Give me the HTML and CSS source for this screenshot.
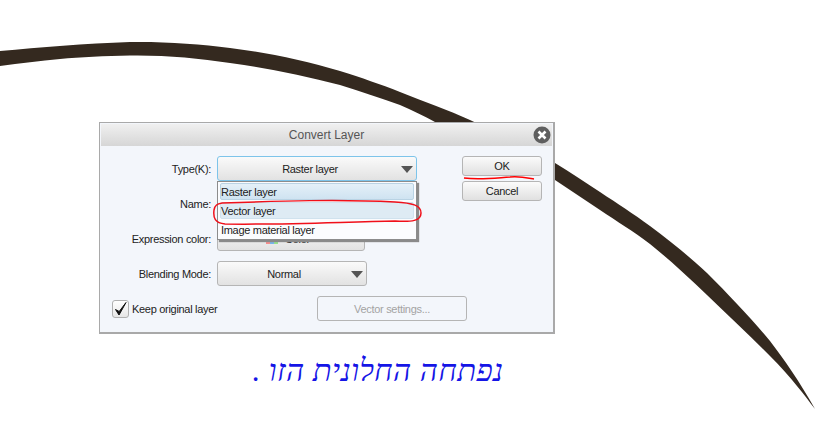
FILE: index.html
```html
<!DOCTYPE html>
<html lang="en">
<head>
    <meta charset="UTF-8">
    <title>Convert Layer</title>
    <link rel="stylesheet" href="styles.css">
</head>
<body>
    <div class="stage">
        <svg class="stroke" width="829" height="437" viewBox="0 0 829 437">
            <path fill="#34291f" d="M0 51 C40 47.5 85 43.5 130 42 C165 41.5 200 44 230 48 C270 53 305 61 340 71 C362 78 380 84 400 92 C425 102 448 110 470 120 C500 134 530 148 555 163 C571 173 585 182 600 192 C618 204 633 213.5 650 226 C670 241 690 257 707 273 C730 296 750 317 770 341 C783 358 800 382 815 409 C805 396 792 378 770 356 C750 336 728 315 707 295 C688 277 670 260 650 244 C633 231 617 221.5 600 210 C585 200 570 190 555 180 C520 157 478 140 435 122 C424 116 412 110 400 105 C380 98 360 91 340 85 C305 76 268 68 230 63 C198 58 165 55 130 55.5 C105 56 80 57 60 59 C40 61 20 63 0 66 Z"/>
        </svg>

        <div class="dialog">
            <div class="title-bar">
                <span>Convert Layer</span>
                <svg class="close" width="18" height="18" viewBox="0 0 18 18">
                    <circle cx="9" cy="9" r="8.5" fill="#5f5f5f"/>
                    <path d="M5.5 5.5 L12.5 12.5 M12.5 5.5 L5.5 12.5" stroke="#fff" stroke-width="2.6"/>
                </svg>
            </div>
            <div class="dialog-body">
                <div class="form">
                    <div class="row">
                        <label>Type(K):</label>
                        <div class="select select-wide select-focus">Raster layer<i class="arrow"></i></div>
                    </div>
                    <div class="row">
                        <label>Name:</label>
                    </div>
                    <div class="row">
                        <label>Expression color:</label>
                        <div class="select select-short">
                            <span class="swatch"><b class="red"></b><b class="blue"></b><b class="green"></b></span>Color<i class="arrow arrow-small"></i>
                        </div>
                    </div>
                    <div class="row">
                        <label>Blending Mode:</label>
                        <div class="select select-blend">Normal<i class="arrow"></i></div>
                    </div>
                    <div class="bottom-row">
                        <div class="keep">
                            <span class="checkbox">
                                <svg width="15" height="16" viewBox="0 0 15 16"><path d="M2.5 8.5 L6 14 L13 1.5 L6.2 10.5 Z" fill="#111" stroke="#111" stroke-width="1"/></svg>
                            </span>
                            Keep original layer
                        </div>
                        <button class="btn btn-disabled">Vector settings...</button>
                    </div>
                </div>
                <div class="actions">
                    <button class="btn">OK</button>
                    <button class="btn">Cancel</button>
                </div>
            </div>
            <div class="menu">
                <div class="menu-item menu-item-hot">Raster layer</div>
                <div class="menu-item menu-item-sel">Vector layer</div>
                <div class="menu-item menu-item-last">Image material layer</div>
            </div>
        </div>

        <svg class="marks" width="829" height="437" viewBox="0 0 829 437">
            <path d="M464 178 C480 180 495 178 510 177 C520 176 528 178 534 179" fill="none" stroke="#f00" stroke-width="1.5"/>
            <path d="M222 203 C280 201 340 199 395 202 C412 203 421 205 421 213 C421 221 412 222 395 221 C340 222 280 225 225 224 C215 223 213 218 214 210 C215 205 217 204 222 203" fill="none" stroke="#f0101a" stroke-width="1.5"/>
        </svg>

        <div class="note" dir="rtl">נפתחה החלונית הזו .</div>
    </div>
</body>
</html>
```

FILE: styles.css
```css
body { margin: 0; background: #fff; font-family: "Liberation Sans", Arial, sans-serif; font-size: 11px; letter-spacing: -0.3px; color: #222; }
.stage { position: relative; width: 829px; height: 437px; overflow: hidden; }
.stroke, .marks { position: absolute; left: 0; top: 0; }
.stroke { filter: blur(0.6px); }

.dialog { position: absolute; left: 99px; top: 122px; width: 456px; height: 212px; box-sizing: border-box; border: 1px solid #a9a9a9; border-bottom: 2px solid #a9a9a9; border-right-width: 2px; background: #f3f6fb; }
.title-bar { height: 22px; display: flex; align-items: center; justify-content: center; position: relative; margin: 1px 1px 0; background: linear-gradient(#f0f0f0, #d6d6d6); color: #555; font-size: 12px; letter-spacing: 0; }
.close { position: absolute; right: 1px; top: 2px; }

.dialog-body { display: flex; padding-top: 10px; }
.form { width: 362px; display: flex; flex-direction: column; gap: 10px; }
.row { height: 25px; display: flex; align-items: center; }
.row label { width: 111px; margin-right: 6px; text-align: right; flex: none; }

.select { height: 25px; box-sizing: border-box; position: relative; display: flex; align-items: center; justify-content: center; border: 1px solid #b5b5b5; border-radius: 3px; background: linear-gradient(#fafafa, #e2e2e2); }
.select-wide { width: 200px; padding-right: 14px; }
.select-focus { border-color: #7dc4ea; }
.select-short { width: 148px; padding-right: 6px; }
.select-blend { width: 150px; padding-right: 16px; }
.arrow { position: absolute; right: 3px; top: 9px; border-left: 6px solid transparent; border-right: 6px solid transparent; border-top: 7px solid #555; }
.arrow-small { right: 3px; top: 11px; border-left-width: 3px; border-right-width: 3px; border-top-width: 4px; }
.swatch { display: flex; margin-right: 7px; }
.swatch b { width: 4px; height: 11px; }
.swatch .red { background: #f58d8d; }
.swatch .blue { background: #78b4ea; }
.swatch .green { background: #95e08d; }

.bottom-row { display: flex; align-items: center; justify-content: space-between; height: 25px; padding-left: 12px; }
.keep { display: flex; align-items: center; gap: 3px; }
.checkbox { width: 15px; height: 16px; display: block; border: 1px solid #b0b0b0; border-radius: 3px; background: linear-gradient(#fff, #e6e6e6); }
.checkbox svg { display: block; }

.actions { display: flex; flex-direction: column; gap: 5px; }
.btn { width: 80px; height: 20px; box-sizing: border-box; padding: 0; border: 1px solid #b5b5b5; border-radius: 3px; background: linear-gradient(#fbfbfb, #e0e0e0); font: inherit; letter-spacing: inherit; color: #222; }
.btn-disabled { width: 150px; height: 25px; background: #f3f6fb; color: #a3a3a3; margin-right: -5px; }

.menu { position: absolute; left: 117px; top: 58px; width: 200px; height: 59px; box-sizing: border-box; padding: 1px 2px 0; display: flex; flex-direction: column; gap: 2px; border: 1px solid #8c8c8c; background: #fbfcfe; box-shadow: 2px 2px 1px #8a8a8a; }
.menu-item { height: 17px; padding-left: 1px; line-height: 16px; box-sizing: border-box; }
.menu-item-hot { background: linear-gradient(#e4f0f8, #cfe3f1); border: 1px solid #b9d3e4; padding-left: 0; border-radius: 2px; }
.menu-item-sel { background: #deebf4; border: 1px solid #d0e2ee; padding-left: 0; border-radius: 2px; }
.menu-item-last { line-height: 18px; }

.note { position: absolute; left: 250px; top: 351px; width: 256px; color: #1515e6; font-size: 31px; line-height: 40px; letter-spacing: 0.4px; white-space: nowrap; text-align: center; font-style: italic; font-family: "Liberation Serif", serif; }
```
